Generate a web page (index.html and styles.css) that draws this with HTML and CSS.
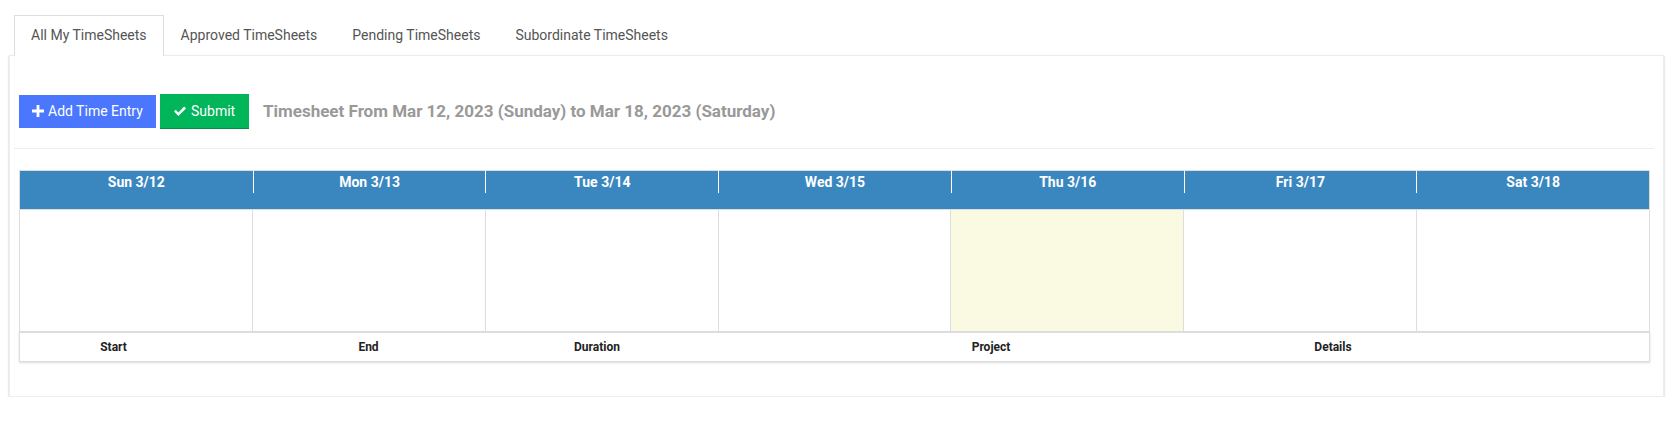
FILE: index.html
```html
<!DOCTYPE html>
<html>
<head>
<meta charset="utf-8">
<link rel="stylesheet" href="styles.css">
</head>
<body>
<div class="page">
  <ul class="tabs">
    <li class="tab active">All My TimeSheets</li>
    <li class="tab">Approved TimeSheets</li>
    <li class="tab">Pending TimeSheets</li>
    <li class="tab">Subordinate TimeSheets</li>
  </ul>
  <div class="panel">
    <div class="toolbar">
      <button class="btn btn-add">
        <svg class="ico" viewBox="0 0 12 12" width="12" height="12"><path d="M4.6 0h2.8v4.6H12v2.8H7.4V12H4.6V7.4H0V4.6h4.6z" fill="#fff"/></svg>
        Add Time Entry
      </button>
      <button class="btn btn-submit">
        <svg class="ico" viewBox="0 0 14 11" width="14" height="11"><path d="M1 5.6l1.8-1.8 2.6 2.6L11.2.6 13 2.4 5.4 10z" fill="#fff"/></svg>
        Submit
      </button>
      <h2 class="title">Timesheet From Mar 12, 2023 (Sunday) to Mar 18, 2023 (Saturday)</h2>
    </div>
    <hr class="sep">
    <div class="calendar">
      <div class="cal-head">
        <div class="dh">Sun 3/12</div>
        <div class="dh">Mon 3/13</div>
        <div class="dh">Tue 3/14</div>
        <div class="dh">Wed 3/15</div>
        <div class="dh">Thu 3/16</div>
        <div class="dh">Fri 3/17</div>
        <div class="dh">Sat 3/18</div>
      </div>
      <div class="cal-body">
        <div class="dc"></div>
        <div class="dc"></div>
        <div class="dc"></div>
        <div class="dc"></div>
        <div class="dc today"></div>
        <div class="dc"></div>
        <div class="dc"></div>
      </div>
      <div class="entries">
        <div class="ec">Start</div>
        <div class="ec">End</div>
        <div class="ec">Duration</div>
        <div class="ec">Project</div>
        <div class="ec">Details</div>
        <div class="ec"></div>
      </div>
    </div>
  </div>
</div>
</body>
</html>
```

FILE: styles.css
```css
* { box-sizing: border-box; }
html, body { margin: 0; padding: 0; background: #fff; }
body { font-family: Roboto, "Liberation Sans", sans-serif; color: #555; }

.page { padding: 15px 2px 0 9px; width: 1666px; }

.tabs {
  list-style: none;
  margin: 0 0 0 5px;
  padding: 0;
  display: flex;
  gap: 1px;
  position: relative;
  z-index: 2;
}
.tab {
  height: 41px;
  line-height: 39px;
  padding: 0 17px 0 15px;
  font-size: 14px;
  color: #555;
  border: 1px solid transparent;
  border-bottom: 0;
}
.tab.active {
  background: #fff;
  border-color: #ddd;
  padding: 0 16px;
}

.panel {
  margin-top: -1px;
  width: 1655px;
  height: 342px;
  border: 1px solid #eee;
  background: #fff;
  box-shadow: 0 1px 2px rgba(0,0,0,0.25);
  padding: 38px 13px 0 9px;
}

.toolbar {
  display: flex;
  align-items: center;
  height: 34px;
}
.btn {
  display: flex;
  align-items: center;
  gap: 4px;
  height: 33px;
  border: 0;
  font-family: Roboto, "Liberation Sans", sans-serif;
  font-size: 14px;
  color: #fff;
  cursor: pointer;
}
.btn-add {
  background: #4a77fe;
  width: 137px;
  padding: 0 0 0 13px;
}
.btn-submit {
  background: #00b55a;
  width: 89px;
  height: 34px;
  padding: 0 0 0 13px;
  margin-left: 4px;
  box-shadow: 0 1px 0 #0b8c46;
}
.ico { flex: none; }
.title {
  margin: 0 0 0 14px;
  font-size: 17px;
  font-weight: bold;
  color: #999;
  line-height: 20px;
}

.sep {
  margin: 20px -4px 0 -5px;
  border: 0;
  border-top: 1px solid #eee;
  height: 0;
}

.calendar {
  margin-top: 21px;
  width: 1631px;
}
.cal-head {
  display: grid;
  grid-template-columns: repeat(7, 1fr);
  height: 40px;
  background: #3a87bf;
  border: 1px solid #ddd;
  align-items: start;
}
.dh {
  height: 22px;
  line-height: 22px;
  text-align: center;
  color: #fff;
  font-weight: bold;
  font-size: 14px;
  border-left: 1px solid #fff;
}
.dh:first-child { border-left: 0; }

.cal-body {
  display: grid;
  grid-template-columns: repeat(7, 1fr);
  height: 121px;
  border-left: 1px solid #ddd;
}
.dc {
  border-right: 1px solid #ddd;
}
.dc.today { background: #fafae3; }

.entries {
  display: grid;
  grid-template-columns: 187px 323px 134px 654px 30px 1fr;
  height: 31px;
  border: 1px solid #ddd;
  border-top: 2px solid #ddd;
  box-shadow: 0 1px 2px rgba(0,0,0,0.15);
  align-items: center;
}
.ec {
  display: flex;
  justify-content: center;
  font-size: 12px;
  font-weight: bold;
  color: #222;
  white-space: nowrap;
}
```
